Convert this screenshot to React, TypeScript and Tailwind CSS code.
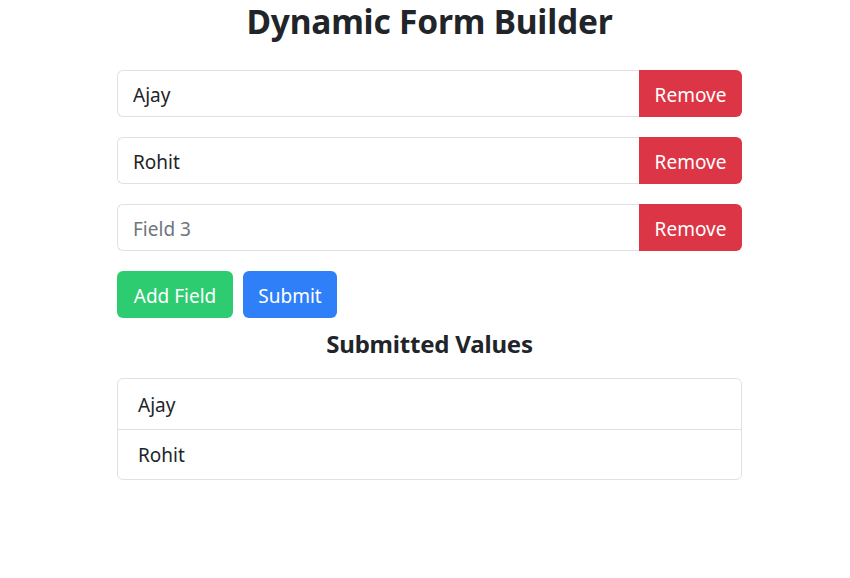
import { useState } from "react";

const font = { fontFamily: '"Noto Sans", "Open Sans", sans-serif' };

export default function App() {
  const [fields] = useState(["Ajay", "Rohit", ""]);
  const submitted = ["Ajay", "Rohit"];

  return (
    <div className="min-h-[578px] bg-white text-[#212529] font-['Noto_Sans',sans-serif]">
      <div className="ml-[117px] w-[625px]">
        <h2 className="text-center text-[33.5px] font-bold leading-[42px] mb-[28px] tracking-[-0.2px]">
          Dynamic Form Builder
        </h2>

        {fields.map((value, i) => (
          <div key={i} className="flex h-[47px] mb-[20px]">
            <input
              defaultValue={value}
              placeholder={`Field ${i + 1}`}
              style={font}
              className="flex-1 min-w-0 h-full border border-[#dee2e6] border-r-0 rounded-l-[6px] px-[15px] pt-[3px] text-[19px] text-[#212529] placeholder:text-[#6c757d] outline-none"
            />
            <button className="w-[103px] h-full pt-[3px] bg-[#dc3545] text-white text-[19px] rounded-r-[6px]">
              Remove
            </button>
          </div>
        ))}

        <div className="flex gap-[10px] h-[47px]">
          <button className="w-[116px] h-full pt-[3px] bg-[#2ecc71] text-white text-[19px] rounded-[6px]">
            Add Field
          </button>
          <button className="w-[94px] h-full pt-[3px] bg-[#2f80f8] text-white text-[19px] rounded-[6px]">
            Submit
          </button>
        </div>

        <h4 className="text-center text-[24px] font-bold leading-[29px] mt-[11px] mb-[20px] tracking-[-0.2px]">
          Submitted Values
        </h4>

        <ul className="border border-[#dee2e6] rounded-[6px]">
          {submitted.map((v, i) => (
            <li
              key={v}
              className={`h-[50px] flex items-center px-[20px] pt-[2px] text-[19px] ${
                i > 0 ? "border-t border-[#dee2e6]" : ""
              }`}
            >
              {v}
            </li>
          ))}
        </ul>
      </div>
    </div>
  );
}
